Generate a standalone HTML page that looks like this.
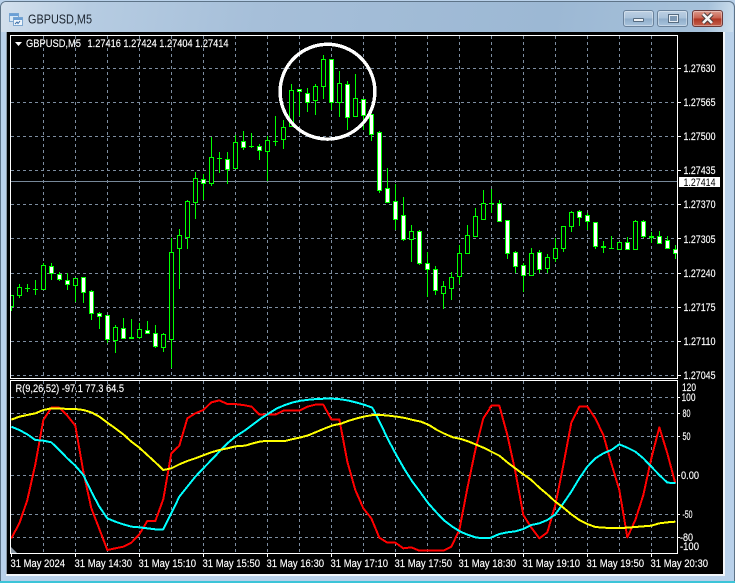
<!DOCTYPE html>
<html><head><meta charset="utf-8"><title>GBPUSD,M5</title>
<style>
html,body{margin:0;padding:0;width:735px;height:583px;overflow:hidden;background:#fff}
#w{position:absolute;left:0;top:0;width:735px;height:583px;overflow:hidden;background:#b9d1ea}
#e{position:absolute;left:0;top:1px;width:733px;height:580px;background:#b9d1ea;border:1px solid #5e7488;border-bottom:0;border-radius:6px 6px 0 0;box-sizing:content-box}
#t{position:absolute;left:1px;top:2px;width:732px;height:30px;border-radius:5px 5px 0 0;background:linear-gradient(100deg,#d3e0ed 0,#b6cce2 12%,#a6bfd9 35%,#9cb8d4 75%,#a6c1da 96%,#cddfee 100%)}
#b{position:absolute;left:0;top:581px;width:735px;height:2px;background:#3cc4d8}
.btn{position:absolute;top:10px;width:31px;height:17px;box-sizing:border-box;border:1px solid #6a829b;border-radius:3px;background:linear-gradient(#bdd0e3 0,#a9c2da 48%,#8fadca 52%,#a9c4dd 100%);box-shadow:inset 0 0 0 1px rgba(255,255,255,.35)}
#cl{background:linear-gradient(#dc9a8c 0,#c8604e 48%,#ae3522 52%,#c4604c 100%);border-color:#6b3a3a}
svg{position:absolute;left:0;top:0}
text{font-family:"Liberation Sans",sans-serif;font-size:11px;fill:#fff;stroke:#fff;stroke-width:.15px}
</style></head><body>
<div id="w">
<div id="e"></div><div id="t"></div><div id="b"></div>
<div class="btn" style="left:623px"><div style="position:absolute;left:9px;top:7px;width:11px;height:4px;background:#eef2f6;border:1px solid #566b80;box-sizing:border-box;border-radius:1px"></div></div>
<div class="btn" style="left:657px"><div style="position:absolute;left:10px;top:3px;width:11px;height:9px;box-sizing:border-box;border:2px solid #e9eff5;outline:1px solid #566b80;outline-offset:-1px;background:#7d98b3"></div></div>
<div class="btn" id="cl" style="left:692px"><svg width="29" height="15"><path d="M10 3l9 9M19 3l-9 9" stroke="#4a3a3a" stroke-width="4.5"/><path d="M10 3l9 9M19 3l-9 9" stroke="#f4f4f4" stroke-width="2.6"/></svg></div>
<svg width="735" height="583" viewBox="0 0 735 583">
<defs><clipPath id="m"><rect x="11" y="36" width="666" height="342"/></clipPath><clipPath id="s"><rect x="11" y="381" width="666" height="172"/></clipPath></defs>
<g>
<rect x="9.500" y="13.500" width="9" height="8" fill="#d8e8f6" stroke="#7fa8d0"/><rect x="9.500" y="13.500" width="9" height="2.500" fill="#6a9fd6"/>
<rect x="13.500" y="17.500" width="9" height="8" fill="#eef5fb" stroke="#7fa8d0"/><rect x="13.500" y="17.500" width="9" height="2.500" fill="#6a9fd6"/>
<path d="M15 24l2-2 1 1.500 2-2.500" fill="none" stroke="#3a6ea8"/>
<text x="28" y="23.500" textLength="64" lengthAdjust="spacingAndGlyphs" style="font-size:12.500px;fill:#1c2530;stroke:none">GBPUSD,M5</text>
</g>
<rect x="7" y="32" width="716" height="542" fill="#000"/>
<rect x="6" y="32" width="1" height="542" fill="#8a97a3"/>
<rect x="6" y="574" width="718" height="2" fill="#f2f6fa"/>
<rect x="723" y="32" width="2" height="544" fill="#f2f6fa"/>
<g stroke="#7d8da0" stroke-width="1" fill="none" stroke-dasharray="3 3" shape-rendering="crispEdges">
<path d="M43.500 36V378M75.500 36V378M107.500 36V378M139.500 36V378M171.500 36V378M203.500 36V378M235.500 36V378M267.500 36V378M299.500 36V378M331.500 36V378M363.500 36V378M395.500 36V378M427.500 36V378M459.500 36V378M491.500 36V378M523.500 36V378M555.500 36V378M587.500 36V378M619.500 36V378M651.500 36V378"/>
<path d="M43.500 381V553M75.500 381V553M107.500 381V553M139.500 381V553M171.500 381V553M203.500 381V553M235.500 381V553M267.500 381V553M299.500 381V553M331.500 381V553M363.500 381V553M395.500 381V553M427.500 381V553M459.500 381V553M491.500 381V553M523.500 381V553M555.500 381V553M587.500 381V553M619.500 381V553M651.500 381V553"/>
<path d="M11 68.500H677M11 102.500H677M11 136.500H677M11 170.500H677M11 204.500H677M11 238.500H677M11 273.500H677M11 307.500H677M11 341.500H677M11 375.500H677"/>
<path d="M11 397.500H677M11 413.500H677M11 436.500H677M11 475.500H677M11 514.500H677M11 537.500H677"/>
</g>
<path d="M11 181.500H677" stroke="#778899" shape-rendering="crispEdges"/>
<g clip-path="url(#m)" shape-rendering="crispEdges">
<path fill="none" stroke="#0f0" d="M11.500 295V311M19.500 284V298M27.500 284V292M35.500 280V295M43.500 263V290M51.500 263V280M59.500 272V281M67.500 273V290M75.500 278V302M83.500 277V303M91.500 290V320M99.500 312V329M107.500 315V343M115.500 325V353M123.500 318V339M131.500 319V339M139.500 323V339M147.500 321V334M155.500 325V348M163.500 333V352M171.500 238V368M179.500 229V289M187.500 200V249M195.500 172V219M203.500 174V200M211.500 137V186M219.500 152V173M227.500 152V184M235.500 135V168M243.500 131V150M251.500 133V148M259.500 144V160M267.500 136V181M275.500 116V146M283.500 120V149M291.500 84V127M299.500 90V116M307.500 88V112M315.500 84V115M323.500 55V99M331.500 59V110M339.500 71V117M347.500 81V130M355.500 74V117M363.500 99V130M371.500 114V141M379.500 131V193M387.500 168V202M395.500 184V230M403.500 197V241M411.500 225V262M419.500 230V265M427.500 252V297M435.500 266V295M443.500 281V309M451.500 272V300M459.500 245V284M467.500 225V253M475.500 208V236M483.500 190V220M491.500 189V213M499.500 200V221M507.500 220V259M515.500 251V273M523.500 263V292M531.500 248V275M539.500 250V273M547.500 254V273M555.500 238V262M563.500 226V252M571.500 211V232M579.500 210V226M587.500 213V230M595.500 222V249M603.500 241V253M611.500 236V249M619.500 242V249M627.500 237V249M635.500 220V249M643.500 220V238M651.500 232V243M659.500 231V243M667.500 236V249M675.500 245V259"/>
<path fill="none" stroke="#0f0" d="M25 288.500h5M33 289.500h5M129 337.500h5M129 338.500h5M217 158.500h5M249 146.500h5M273 141.500h5M489 203.500h5M601 246.500h5M601 247.500h5M609 248.500h5M649 236.500h5M649 237.500h5"/>
<g fill="#000" stroke="#0f0">
<rect x="9.500" y="295.500" width="4" height="11"/><rect x="17.500" y="287.500" width="4" height="8"/><rect x="41.500" y="265.500" width="4" height="24"/><rect x="73.500" y="278.500" width="4" height="7"/><rect x="113.500" y="327.500" width="4" height="13"/><rect x="137.500" y="329.500" width="4" height="8"/><rect x="161.500" y="334.500" width="4" height="13"/><rect x="169.500" y="252.500" width="4" height="87"/><rect x="177.500" y="235.500" width="4" height="13"/><rect x="185.500" y="201.500" width="4" height="36"/><rect x="193.500" y="178.500" width="4" height="24"/><rect x="209.500" y="157.500" width="4" height="26"/><rect x="233.500" y="142.500" width="4" height="26"/><rect x="265.500" y="140.500" width="4" height="11"/><rect x="281.500" y="127.500" width="4" height="12"/><rect x="289.500" y="90.500" width="4" height="36"/><rect x="313.500" y="86.500" width="4" height="14"/><rect x="321.500" y="59.500" width="4" height="27"/><rect x="337.500" y="83.500" width="4" height="19"/><rect x="353.500" y="98.500" width="4" height="18"/><rect x="409.500" y="231.500" width="4" height="8"/><rect x="441.500" y="286.500" width="4" height="7"/><rect x="449.500" y="277.500" width="4" height="11"/><rect x="457.500" y="253.500" width="4" height="23"/><rect x="465.500" y="235.500" width="4" height="18"/><rect x="473.500" y="216.500" width="4" height="20"/><rect x="481.500" y="203.500" width="4" height="16"/><rect x="529.500" y="253.500" width="4" height="22"/><rect x="545.500" y="257.500" width="4" height="11"/><rect x="553.500" y="248.500" width="4" height="10"/><rect x="561.500" y="226.500" width="4" height="22"/><rect x="569.500" y="212.500" width="4" height="14"/><rect x="617.500" y="242.500" width="4" height="7"/><rect x="633.500" y="221.500" width="4" height="28"/>
</g>
<g fill="#fff" stroke="#0f0">
<rect x="49.500" y="266.500" width="4" height="7"/><rect x="57.500" y="274.500" width="4" height="5"/><rect x="65.500" y="280.500" width="4" height="4"/><rect x="81.500" y="277.500" width="4" height="15"/><rect x="89.500" y="291.500" width="4" height="22"/><rect x="97.500" y="313.500" width="4" height="3"/><rect x="105.500" y="315.500" width="4" height="24"/><rect x="121.500" y="328.500" width="4" height="10"/><rect x="145.500" y="330.500" width="4" height="3"/><rect x="153.500" y="333.500" width="4" height="13"/><rect x="201.500" y="179.500" width="4" height="4"/><rect x="225.500" y="159.500" width="4" height="10"/><rect x="241.500" y="141.500" width="4" height="6"/><rect x="257.500" y="146.500" width="4" height="4"/><rect x="297.500" y="89.500" width="4" height="2"/><rect x="305.500" y="93.500" width="4" height="9"/><rect x="329.500" y="59.500" width="4" height="43"/><rect x="345.500" y="84.500" width="4" height="33"/><rect x="361.500" y="99.500" width="4" height="16"/><rect x="369.500" y="114.500" width="4" height="20"/><rect x="377.500" y="132.500" width="4" height="58"/><rect x="385.500" y="188.500" width="4" height="14"/><rect x="393.500" y="201.500" width="4" height="18"/><rect x="401.500" y="215.500" width="4" height="24"/><rect x="417.500" y="231.500" width="4" height="32"/><rect x="425.500" y="263.500" width="4" height="6"/><rect x="433.500" y="269.500" width="4" height="21"/><rect x="497.500" y="203.500" width="4" height="18"/><rect x="505.500" y="220.500" width="4" height="33"/><rect x="513.500" y="252.500" width="4" height="14"/><rect x="521.500" y="265.500" width="4" height="10"/><rect x="537.500" y="252.500" width="4" height="17"/><rect x="577.500" y="211.500" width="4" height="6"/><rect x="585.500" y="215.500" width="4" height="6"/><rect x="593.500" y="222.500" width="4" height="24"/><rect x="625.500" y="242.500" width="4" height="7"/><rect x="641.500" y="221.500" width="4" height="15"/><rect x="657.500" y="236.500" width="4" height="7"/><rect x="665.500" y="240.500" width="4" height="8"/><rect x="673.500" y="249.500" width="4" height="4"/>
</g>
<circle cx="327.500" cy="91.700" r="47.400" fill="none" stroke="#fff" stroke-width="3.400"/>
</g>
<g clip-path="url(#s)" fill="none" stroke-width="6" shape-rendering="crispEdges" stroke-linejoin="round">
<g stroke="#f00">
<polyline transform="translate(0 375) scale(.33333)" points="34,490 58,445 82,375 106,268 130,135 154,98 178,98 202,122 226,152 250,290 274,400 298,462 322,525 346,520 370,515 394,503 418,478 442,438 466,438 490,372 514,235 538,212 562,130 586,115 610,105 634,82 658,76 682,87 706,87 735,91"/>
<polyline transform="translate(245 375) scale(.33333)" points="0,91 20,95 43,119 67,119 91,119 115,107 139,107 163,107 187,95 211,89 235,89 259,133 283,133 307,260 331,345 355,400 379,430 403,488 427,503 451,503 475,520 499,517 523,527 547,527 571,527 595,527 619,515 643,465 667,340 691,225 715,130 735,100"/>
<polyline transform="translate(490 375) scale(.33333)" points="-2,100 4,92 28,92 52,180 76,290 100,420 124,458 148,490 172,472 196,390 220,270 244,143 268,95 292,95 316,130 340,180 364,265 388,345 412,487 436,435 460,360 484,250 508,157 532,235 556,325"/>
</g>
<g stroke="#0ff">
<polyline transform="translate(0 375) scale(.33333)" points="34,155 58,165 82,178 106,195 130,197 154,202 178,225 202,250 226,272 250,300 274,350 298,395 322,430 346,440 370,448 394,455 418,457 442,460 466,463 490,463 514,415 538,365 562,335 586,305 610,280 634,255 658,230 682,205 706,185 735,166"/>
<polyline transform="translate(245 375) scale(.33333)" points="0,166 24,148 48,130 72,115 96,100 120,90 144,82 168,77 192,74 216,72 240,71 264,71 288,73 312,77 336,83 360,90 382,98 406,145 430,195 454,240 478,282 502,320 526,352 550,385 574,412 598,437 622,455 646,470 670,480 694,488 718,489 735,489"/>
<polyline transform="translate(490 375) scale(.33333)" points="0,489 28,477 52,472 76,469 100,462 124,450 148,445 172,435 196,418 220,385 244,350 268,310 292,275 316,250 340,235 364,225 388,208 412,218 436,230 460,250 484,275 508,300 532,323 556,324"/>
</g>
<g stroke="#ff0">
<polyline transform="translate(0 375) scale(.33333)" points="34,134 58,125 82,120 106,115 130,105 154,100 178,100 202,102 226,102 250,105 274,112 298,125 322,143 346,160 370,178 394,200 418,218 442,240 466,262 490,285 514,280 538,268 562,258 586,250 610,241 634,232 658,225 682,220 706,214 735,212"/>
<polyline transform="translate(245 375) scale(.33333)" points="0,212 24,205 48,199 72,198 96,198 120,198 144,192 168,187 192,180 216,170 240,160 264,151 288,146 312,137 336,130 360,124 384,120 408,120 432,122 456,125 480,129 504,135 528,140 552,150 576,165 600,177 624,187 648,192 672,200 696,210 720,220 735,228"/>
<polyline transform="translate(490 375) scale(.33333)" points="0,228 28,242 52,262 76,280 100,298 124,315 148,338 172,358 196,380 220,398 244,418 268,435 292,447 316,456 340,458 364,459 388,459 412,458 436,456 460,454 484,452 508,445 532,442 556,440"/>
</g>
</g>
<path d="M11 553v-6l6 6z" fill="#8a97a3"/>
<g fill="none" stroke="#fff" shape-rendering="crispEdges">
<rect x="10.500" y="35.500" width="667" height="343"/>
<rect x="10.500" y="380.500" width="667" height="173"/>
<path d="M678 68.500h3M678 102.500h3M678 136.500h3M678 170.500h3M678 204.500h3M678 238.500h3M678 273.500h3M678 307.500h3M678 341.500h3M678 375.500h3"/>
<path d="M678 397.500h2M678 413.500h2M678 436.500h2M678 475.500h2M678 514.500h2M678 537.500h2"/>
<path d="M11.500 554v3M75.500 554v3M139.500 554v3M203.500 554v3M267.500 554v3M331.500 554v3M395.500 554v3M459.500 554v3M523.500 554v3M587.500 554v3M651.500 554v3"/>
</g>
<path d="M15 42h7l-3.500 4z" fill="#fff"/>
<text x="26" y="47" textLength="55" lengthAdjust="spacingAndGlyphs">GBPUSD,M5</text>
<text x="87.500" y="47" textLength="141" lengthAdjust="spacingAndGlyphs">1.27416 1.27424 1.27404 1.27414</text>
<text x="15.500" y="392" textLength="108.500" lengthAdjust="spacingAndGlyphs">R(9,26,52) -97.1 77.3 64.5</text>
<g>
<text x="683.500" y="72" textLength="32" lengthAdjust="spacingAndGlyphs">1.27630</text>
<text x="683.500" y="106" textLength="32" lengthAdjust="spacingAndGlyphs">1.27565</text>
<text x="683.500" y="140" textLength="32" lengthAdjust="spacingAndGlyphs">1.27500</text>
<text x="683.500" y="174" textLength="32" lengthAdjust="spacingAndGlyphs">1.27435</text>
<text x="683.500" y="208" textLength="32" lengthAdjust="spacingAndGlyphs">1.27370</text>
<text x="683.500" y="243" textLength="32" lengthAdjust="spacingAndGlyphs">1.27305</text>
<text x="683.500" y="277" textLength="32" lengthAdjust="spacingAndGlyphs">1.27240</text>
<text x="683.500" y="311" textLength="32" lengthAdjust="spacingAndGlyphs">1.27175</text>
<text x="683.500" y="345" textLength="32" lengthAdjust="spacingAndGlyphs">1.27110</text>
<text x="683.500" y="379" textLength="32" lengthAdjust="spacingAndGlyphs">1.27045</text>
<rect x="679" y="177" width="41" height="10" fill="#fff"/>
<text x="683.500" y="186" textLength="32" lengthAdjust="spacingAndGlyphs" style="fill:#000;stroke:none">1.27414</text>
<text x="682" y="391" textLength="14" lengthAdjust="spacingAndGlyphs">120</text>
<text x="681.500" y="401" textLength="14" lengthAdjust="spacingAndGlyphs">100</text>
<text x="682.500" y="417" textLength="8" lengthAdjust="spacingAndGlyphs">80</text>
<text x="682.500" y="440" textLength="8" lengthAdjust="spacingAndGlyphs">50</text>
<text x="681" y="479" textLength="18" lengthAdjust="spacingAndGlyphs">0.00</text>
<text x="682.500" y="518" textLength="10" lengthAdjust="spacingAndGlyphs">-50</text>
<text x="680" y="541" textLength="13" lengthAdjust="spacingAndGlyphs">-80</text>
<text x="680" y="550" textLength="19" lengthAdjust="spacingAndGlyphs">-100</text>
</g>
<g>
<text x="10.500" y="567" textLength="54.500" lengthAdjust="spacingAndGlyphs">31 May 2024</text>
<text x="74.500" y="567" textLength="57.500" lengthAdjust="spacingAndGlyphs">31 May 14:30</text>
<text x="138.500" y="567" textLength="57.500" lengthAdjust="spacingAndGlyphs">31 May 15:10</text>
<text x="202.500" y="567" textLength="57.500" lengthAdjust="spacingAndGlyphs">31 May 15:50</text>
<text x="266.500" y="567" textLength="57.500" lengthAdjust="spacingAndGlyphs">31 May 16:30</text>
<text x="330.500" y="567" textLength="57.500" lengthAdjust="spacingAndGlyphs">31 May 17:10</text>
<text x="394.500" y="567" textLength="57.500" lengthAdjust="spacingAndGlyphs">31 May 17:50</text>
<text x="458.500" y="567" textLength="57.500" lengthAdjust="spacingAndGlyphs">31 May 18:30</text>
<text x="522.500" y="567" textLength="57.500" lengthAdjust="spacingAndGlyphs">31 May 19:10</text>
<text x="586.500" y="567" textLength="57.500" lengthAdjust="spacingAndGlyphs">31 May 19:50</text>
<text x="650.500" y="567" textLength="57.500" lengthAdjust="spacingAndGlyphs">31 May 20:30</text>
</g>
</svg>
</div>
</body></html>
